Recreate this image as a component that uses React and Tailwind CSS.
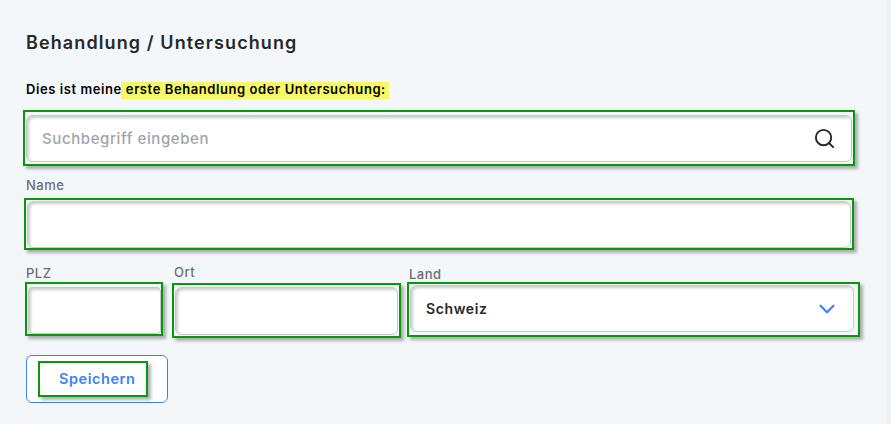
import React from 'react';
import { Search, ChevronDown } from 'lucide-react';

const marked = 'border-2 border-[#069a06] shadow-[3px_3px_3px_rgba(0,0,0,0.3)]';
const field = 'w-full bg-white border border-[#c4c7cc] rounded-md shadow-[inset_2px_2px_3px_rgba(0,0,0,0.2)] outline-none';
const label = 'block h-4 text-[13px] leading-4 font-medium tracking-[0.5px] text-[#6b7076]';

const App = () => {
    return (
        <div className="flex w-[891px] h-[424px] overflow-hidden bg-[#f4f7fa] font-['Inter',sans-serif]">
            <div className="flex-1 pl-[26px] pt-[29px]">
                <h2 className="h-7 text-[18px] leading-7 font-semibold tracking-[1.1px] text-[#26282c]">
                    Behandlung / Untersuchung
                </h2>

                {/* Intro line */}
                <p className="mt-[25px] h-[17px] text-[13px] leading-[15px] font-semibold tracking-[0.58px] text-black whitespace-nowrap">
                    Dies ist meine
                    <span className="ml-[-1px] inline-block h-[17px] pl-[5px] pr-[3px] bg-[#f6f964]">erste Behandlung oder Untersuchung:</span>
                </p>

                {/* Search */}
                <div className={`mt-[11px] ml-[-3px] w-[832px] h-[56px] pl-[1px] pt-[3px] pr-[1px] ${marked}`}>
                    <div className={`${field} h-[47px] flex items-center justify-between pl-[15px] pr-[15px]`}>
                        <span className="pt-[2px] text-[15px] font-medium tracking-[0.6px] text-[#a1a3ad]">Suchbegriff eingeben</span>
                        <Search className="w-[23px] h-[23px] text-[#26282c]" strokeWidth={2} />
                    </div>
                </div>

                {/* Name */}
                <label className={`${label} mt-[11px]`}>Name</label>
                <div className={`mt-[5px] ml-[-2px] w-[830px] h-[52px] pl-[1px] pr-[1px] pt-[1px] ${marked}`}>
                    <div className={`${field} h-[47px]`} />
                </div>

                {/* Address row */}
                <div className="flex items-start mt-[15px]">
                    <div className="w-[148px]">
                        <label className={label}>PLZ</label>
                        <div className={`mt-[1px] ml-[-1px] w-[138px] h-[54px] pl-[1px] pt-[3px] ${marked}`}>
                            <div className={`${field} h-[47px] rounded-sm`} />
                        </div>
                    </div>
                    <div className="w-[235px]">
                        <label className={`${label} -mt-[1px]`}>Ort</label>
                        <div className={`mt-[3px] ml-[-2px] w-[229px] h-[55px] px-[1px] pt-[2px] ${marked}`}>
                            <div className={`${field} h-[48px]`} />
                        </div>
                    </div>
                    <div className="w-[447px]">
                        <label className={`${label} mt-[1px]`}>Land</label>
                        <div className={`ml-[-2px] w-[453px] h-[55px] pl-[1px] pr-[4px] pt-[1px] ${marked}`}>
                            <div className={`${field} h-[47px] flex items-center justify-between pl-[15px] pr-[13px]`}>
                                <span className="text-[14px] font-semibold tracking-[0.6px] text-[#26282c]">Schweiz</span>
                                <ChevronDown className="w-[26px] h-[26px] text-[#3b82f6]" strokeWidth={2} />
                            </div>
                        </div>
                    </div>
                </div>

                {/* Save */}
                <div className="mt-[17px] w-[142px] h-[48px] pl-[11px] pt-[5px] bg-white border border-[#3b82f6] rounded-md">
                    <div className={`w-[110px] h-[36px] flex items-center pl-[19px] ${marked}`}>
                        <span className="text-[14.5px] font-semibold tracking-[0.55px] text-[#3b82f6]">Speichern</span>
                    </div>
                </div>
            </div>
            <div className="w-[5px] bg-[#f1f1f1]" />
        </div>
    );
};

export default App;
